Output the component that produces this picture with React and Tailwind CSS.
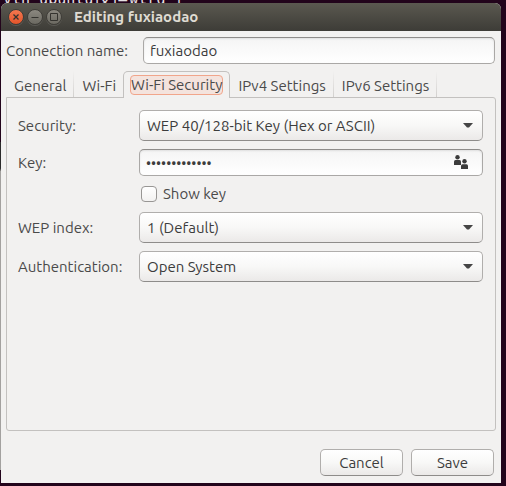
import { useState } from "react";

const field =
  "w-full rounded-[5px] border border-[#aaa8a6] border-t-[#8e8c8a] bg-linear-to-b from-[#f5f5f5] to-white text-[#3c3c3c] shadow-[inset_0_1px_2px_#00000018] outline-none";
const raised =
  "rounded-[5px] border border-[#b0aeac] border-b-[#8e8c8a] bg-linear-to-b from-white via-[#f8f8f7] to-[#ebe9e8] text-[#3c3c3c] outline-none";

function Combo({ id, options }) {
  return (
    <div className="relative">
      <select id={id} className={`${raised} block h-[31px] w-full appearance-none px-[7px]`}>
        {options.map((o) => (
          <option key={o}>{o}</option>
        ))}
      </select>
      <svg viewBox="0 0 10 5" className="pointer-events-none absolute top-[13px] right-[10px] h-[5px] w-[10px]" aria-hidden="true">
        <path d="M0 0H10L6 4.5H4Z" fill="#454545" />
      </svg>
    </div>
  );
}

function WindowButton({ label, tone, children }) {
  return (
    <button
      type="button"
      aria-label={label}
      className={`flex size-[16px] items-center justify-center rounded-full border border-[#3f3d38] bg-linear-to-b shadow-[0_1px_0_#ffffff20] ${tone}`}
    >
      <svg viewBox="0 0 14 14" className="size-[14px] shrink-0" fill="none" stroke="#34332f" strokeWidth="1" aria-hidden="true">
        {children}
      </svg>
    </button>
  );
}

const tabs = ["General", "Wi-Fi", "Wi-Fi Security", "IPv4 Settings", "IPv6 Settings"];

export default function App() {
  const [active, setActive] = useState("Wi-Fi Security");
  const [shown, setShown] = useState(false);
  const activeIndex = tabs.indexOf(active);
  return (
    <div className="relative flex h-screen flex-col overflow-hidden bg-[#22041b] pt-[3px] pr-[5px] pb-[3px] pl-px font-['Ubuntu','Noto_Sans','Noto_Sans_CJK_SC',sans-serif] text-[15px] leading-[20px] text-[#4a4a4a]">
      <div className="absolute top-[-11px] left-[3px] font-['DejaVu_Sans_Mono','Noto_Sans_CJK_SC',monospace] leading-[18px] whitespace-pre text-[#e6e0e4]" aria-hidden="true">
        vtn ubuntu<span className="text-[18px]">技但</span>wtrd |
      </div>
      <div className="absolute top-[142px] bottom-[16px] left-0 w-px bg-linear-to-b from-[#2b2b2b] from-8% to-[#a3a19f] to-9%" />

      <main className="relative flex flex-1 flex-col rounded-t-[6px] bg-[#f2f1f0]">
        <header className="flex h-[28px] items-center gap-[3px] rounded-t-[6px] bg-linear-to-b from-[#5b5950] to-[#3d3c37] pl-[7px]">
          <WindowButton label="Close" tone="from-[#f4784f] to-[#e3542a]">
            <path d="M4.5 4.5L9.5 9.5M9.5 4.5L4.5 9.5" strokeWidth="1.3" />
          </WindowButton>
          <WindowButton label="Minimize" tone="from-[#8b8880] to-[#6b6961]">
            <path d="M3.5 7.5H10.5" />
          </WindowButton>
          <WindowButton label="Maximize" tone="from-[#8b8880] to-[#6b6961]">
            <path d="M3.5 3.5H10.5V10.5H3.5Z" />
          </WindowButton>
          <h1 className="pl-[9px] font-bold text-[#dfdbd2]">Editing fuxiaodao</h1>
        </header>

        <div className="flex items-center gap-[13px] pt-[6px] pr-[6px] pl-[5px]">
          <label htmlFor="name" className="w-[124px] shrink-0 whitespace-nowrap">Connection name:</label>
          <input id="name" defaultValue="fuxiaodao" className={`${field} h-[27px] px-[6px]`} />
        </div>

        <div role="tablist" className="relative z-10 mx-[5px] mt-[7px] -mb-px flex h-[27px] items-end">
          {tabs.map((t, i) =>
            t === active ? (
              <button key={t} type="button" role="tab" aria-selected="true" className="flex h-[27px] items-center rounded-t-[5px] border border-b-0 border-[#c3c1bf] bg-[#f2f1f0] px-[6px]">
                <span className="rounded-[4px] border border-[#f1a58b] bg-[#f4e3dd] leading-[18px] whitespace-nowrap">{t}</span>
              </button>
            ) : (
              <button key={t} type="button" role="tab" aria-selected="false" onClick={() => setActive(t)} className="flex h-[26px] self-start whitespace-nowrap">
                <span className="pt-[5px] pr-[7px] pl-[8px]">{t}</span>
                {i !== activeIndex - 1 && <span className="h-[26px] w-px bg-linear-to-b from-transparent to-[#d2d0ce]" />}
              </button>
            )
          )}
        </div>

        <section role="tabpanel" className="mx-[5px] flex-1 rounded-[3px] rounded-tl-none border border-[#c3c1bf] pt-[12px] pr-[12px] pl-[11px]">
          <div className="grid grid-cols-[113px_1fr] items-center gap-x-[8px] gap-y-[8px]">
            <label htmlFor="security">Security:</label>
            <Combo id="security" options={["WEP 40/128-bit Key (Hex or ASCII)"]} />
            <label htmlFor="key">Key:</label>
            <div className="relative">
              <input id="key" type={shown ? "text" : "password"} defaultValue="1234567890123" className={`${field} block h-[27px] px-[6px] text-[14px]`} />
              <svg viewBox="0 0 14 14" className="absolute top-[6px] right-[15px] size-[14px]" fill="#3c3c3c" aria-hidden="true">
                <circle cx="3.5" cy="2.2" r="2.2" />
                <path d="M0 10V6.5Q0 5 1.5 5H5.5Q7 5 7 6.5V10Z" />
                <circle cx="10.5" cy="6.3" r="2.2" />
                <path d="M7 14V11Q7 9.2 8.5 9.2H12.5Q14 9.2 14 11V14Z" />
              </svg>
            </div>
            <label className="col-start-2 flex h-[20px] items-center gap-[6px] pl-[2px]">
              <input type="checkbox" checked={shown} onChange={(e) => setShown(e.target.checked)} className="size-[16px] appearance-none rounded-[4px] border border-[#989694] bg-linear-to-b from-white to-[#f3f2f1] checked:bg-[#f07746]" />
              Show key
            </label>
            <label htmlFor="index">WEP index:</label>
            <Combo id="index" options={["1 (Default)", "2", "3", "4"]} />
            <label htmlFor="auth">Authentication:</label>
            <Combo id="auth" options={["Open System", "Shared Key"]} />
          </div>
        </section>

        <footer className="flex justify-end gap-[8px] pt-[18px] pr-[7px] pb-[7px]">
          <button type="button" className={`${raised} h-[27px] w-[83px]`}>Cancel</button>
          <button type="button" className={`${raised} h-[27px] w-[83px]`}>Save</button>
        </footer>
      </main>
    </div>
  );
}
